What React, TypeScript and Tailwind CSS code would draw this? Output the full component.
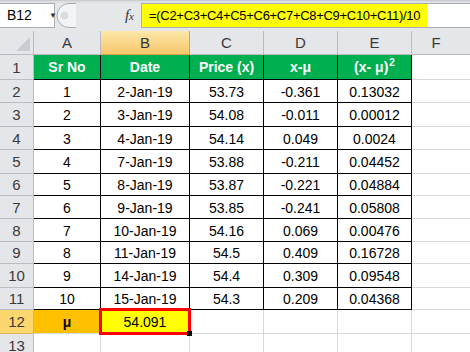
import React from "react";

const rowData: string[][] = [
  ["1", "2-Jan-19", "53.73", "-0.361", "0.13032"],
  ["2", "3-Jan-19", "54.08", "-0.011", "0.00012"],
  ["3", "4-Jan-19", "54.14", "0.049", "0.0024"],
  ["4", "7-Jan-19", "53.88", "-0.211", "0.04452"],
  ["5", "8-Jan-19", "53.87", "-0.221", "0.04884"],
  ["6", "9-Jan-19", "53.85", "-0.241", "0.05808"],
  ["7", "10-Jan-19", "54.16", "0.069", "0.00476"],
  ["8", "11-Jan-19", "54.5", "0.409", "0.16728"],
  ["9", "14-Jan-19", "54.4", "0.309", "0.09548"],
  ["10", "15-Jan-19", "54.3", "0.209", "0.04368"],
];

const heights = [
  "h-[25px]",
  "h-[23px]",
  "h-[24px]",
  "h-[23px]",
  "h-[24px]",
  "h-[22px]",
  "h-[23px]",
  "h-[23px]",
  "h-[22px]",
  "h-[24px]",
  "h-[22px]",
  "h-[24px]",
];

const colW = ["w-[67px]", "w-[89px]", "w-[74px]", "w-[74px]", "w-[74px]"];

function RowHead({ n, sel }: { n: number; sel?: boolean }) {
  return (
    <div
      className={
        "w-[34px] shrink-0 flex items-center justify-center pt-[2px] border-r border-b text-[15px] " +
        (sel
          ? "bg-[#fcd66f] border-[#e3b25a] text-[#3a3a3a]"
          : "bg-[#e4e6e9] border-[#b9bdc2] text-[#3a3a3a]")
      }
    >
      {n}
    </div>
  );
}

function FormulaBar() {
  return (
    <div className="h-[31px] bg-[#e6e7e9] relative">
      <div className="h-[3px] bg-[#dcdee1] border-t border-[#c9ccd0]" />
      <div className="flex h-[25px]">
        <div className="w-[55px] shrink-0 bg-white border border-l-0 border-[#a9afb6] flex items-center pl-[7px] text-[14px] text-black">
          <span>B12</span>
          <span className="ml-[17px] text-[8px] text-[#333]">▼</span>
        </div>
        <div className="w-[86px] shrink-0 flex items-center relative">
          <svg width="20" height="25" viewBox="0 0 20 25" className="ml-[1px]">
            <path d="M20 0.5 H13 A12 12 0 0 0 13 24.5 H20" fill="#f3f4f5" stroke="#a8adb3" />
            <circle cx="8.5" cy="12.5" r="3.2" fill="#dcdfe2" stroke="#c4c8cc" strokeWidth="0.6" />
          </svg>
          <span className="ml-auto mr-[7px] font-['Liberation_Serif',serif] italic text-[15px] text-[#333] leading-none">
            f<span className="text-[11px]">x</span>
          </span>
        </div>
        <div className="flex-1 bg-white border border-r-0 border-[#a9afb6] flex items-end">
          <div className="h-[23px] bg-[#ffff00] flex items-center pl-[7px] pr-[7px] text-[13px] tracking-[-0.3px] text-black whitespace-nowrap">
            =(C2+C3+C4+C5+C6+C7+C8+C9+C10+C11)/10
          </div>
        </div>
      </div>
    </div>
  );
}

function ColHeader() {
  const letters = ["A", "B", "C", "D", "E"];
  return (
    <div className="flex h-[24px]">
      <div className="w-[34px] shrink-0 bg-[#e4e6e9] border-r border-b border-[#b9bdc2] relative">
        <svg width="14" height="14" className="absolute right-[3px] bottom-[3px]" viewBox="0 0 14 14">
          <polygon points="14,0 14,14 0,14" fill="#c9ccd0" />
        </svg>
      </div>
      {letters.map((l, i) => (
        <div
          key={l}
          className={
            colW[i] +
            " shrink-0 flex items-center justify-center pt-[2px] border-r border-b text-[15px] " +
            (l === "B"
              ? "bg-gradient-to-b from-[#fde7a8] to-[#f6c76a] border-[#d9a24a] text-[#333]"
              : "bg-[#e4e6e9] border-[#b9bdc2] text-[#3a3a3a]")
          }
        >
          {l}
        </div>
      ))}
      <div className="flex-1 flex items-center justify-center pt-[2px] pr-[10px] bg-[#e4e6e9] border-b border-[#b9bdc2] text-[15px] text-[#3a3a3a]">
        F
      </div>
    </div>
  );
}

export default function App() {
  return (
    <div className="w-[470px] h-[352px] overflow-hidden bg-white font-['Liberation_Sans',Arial,sans-serif] text-black">
      <FormulaBar />
      <ColHeader />
      <div className={"flex " + heights[0]}>
        <RowHead n={1} />
        {["Sr No", "Date", "Price (x)"].map((t, i) => (
          <div
            key={t}
            className={colW[i] + " shrink-0 bg-[#00b050] text-white font-bold text-[14px] flex items-center justify-center pt-[1px] border-r border-b border-black"}
          >
            {t}
          </div>
        ))}
        <div className={colW[3] + " shrink-0 bg-[#00b050] text-white font-bold text-[14px] flex items-center justify-center pt-[1px] border-r border-b border-black"}>
          x-μ
        </div>
        <div className={colW[4] + " shrink-0 bg-[#00b050] text-white font-bold text-[14px] flex items-center justify-center pt-[1px] border-r border-b border-black"}>
          <span className="relative">
            (x- μ)<span className="text-[10px] relative -top-[6px] ml-[1px]">2</span>
          </span>
        </div>
        <div className="flex-1 border-b border-[#d9d9d9]" />
      </div>
      {rowData.map((r, ri) => (
        <div key={ri} className={"flex " + heights[ri + 1]}>
          <RowHead n={ri + 2} />
          {r.map((v, ci) => (
            <div
              key={ci}
              className={colW[ci] + " shrink-0 flex items-center justify-center pt-[2px] border-r border-b border-black text-[14px]"}
            >
              {v}
            </div>
          ))}
          <div className="flex-1 border-b border-[#d9d9d9]" />
        </div>
      ))}
      <div className={"flex " + heights[11]}>
        <RowHead n={12} sel />
        <div className={colW[0] + " shrink-0 bg-[#ffc000] flex items-center justify-center pt-[2px] border-r border-b border-[#d9d9d9] font-bold text-[14px]"}>
          μ
        </div>
        <div className={colW[1] + " shrink-0 bg-[#ffff00] relative flex items-center justify-center pt-[2px] border-r border-b border-[#d9d9d9] text-[14px]"}>
          54.091
          <div className="absolute -left-[2px] -top-[2px] -right-[2px] -bottom-[2px] border-[3px] border-[#ff0000] z-10">
            <div className="absolute -right-[4px] -bottom-[4px] w-[5px] h-[5px] bg-black" />
          </div>
        </div>
        {[2, 3, 4].map((ci) => (
          <div key={ci} className={colW[ci] + " shrink-0 border-r border-b border-[#d9d9d9]"} />
        ))}
        <div className="flex-1 border-b border-[#d9d9d9]" />
      </div>
      <div className="flex h-[24px]">
        <RowHead n={13} />
        {[0, 1, 2, 3, 4].map((ci) => (
          <div key={ci} className={colW[ci] + " shrink-0 border-r border-b border-[#d9d9d9]"} />
        ))}
        <div className="flex-1 border-b border-[#d9d9d9]" />
      </div>
    </div>
  );
}
